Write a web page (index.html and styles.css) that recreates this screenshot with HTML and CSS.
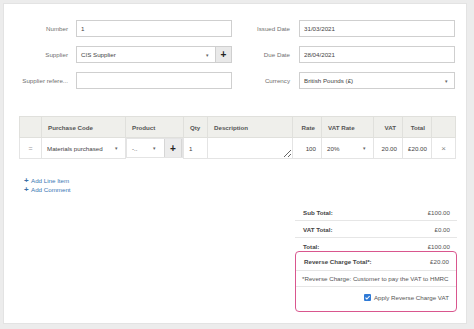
FILE: index.html
```html
<!DOCTYPE html>
<html lang="en">
<head>
    <meta charset="UTF-8">
    <meta name="viewport" content="width=device-width, initial-scale=1.0">
    <title>Purchase Invoice</title>
    <link rel="stylesheet" href="styles.css">
</head>
<body>

    <div class="panel">
        <!-- Header fields -->
        <div class="form-grid">
            <label class="label">Number</label>
            <input class="field" type="text" value="1">
            <label class="label label-right">Issued Date</label>
            <input class="field" type="text" value="31/03/2021">

            <label class="label">Supplier</label>
            <div class="group">
                <div class="field select">
                    <span>CIS Supplier</span>
                    <span class="caret">&#9662;</span>
                </div>
                <button class="add-button">+</button>
            </div>
            <label class="label label-right">Due Date</label>
            <input class="field" type="text" value="28/04/2021">

            <label class="label">Supplier refere...</label>
            <input class="field" type="text" value="">
            <label class="label label-right">Currency</label>
            <div class="field select">
                <span>British Pounds (£)</span>
                <span class="caret">&#9662;</span>
            </div>
        </div>

        <!-- Line items -->
        <table class="lines">
            <colgroup>
                <col style="width: 22px">
                <col style="width: 84px">
                <col style="width: 58px">
                <col style="width: 24px">
                <col style="width: 85px">
                <col style="width: 29px">
                <col style="width: 52px">
                <col style="width: 29px">
                <col style="width: 29px">
                <col style="width: 24px">
            </colgroup>
            <thead>
                <tr>
                    <th></th>
                    <th>Purchase Code</th>
                    <th>Product</th>
                    <th>Qty</th>
                    <th>Description</th>
                    <th class="num">Rate</th>
                    <th>VAT Rate</th>
                    <th class="num">VAT</th>
                    <th class="num">Total</th>
                    <th></th>
                </tr>
            </thead>
            <tbody>
                <tr>
                    <td class="handle">=</td>
                    <td>
                        <div class="cell-select">
                            <span>Materials purchased</span>
                            <span class="caret">&#9662;</span>
                        </div>
                    </td>
                    <td class="product">
                        <div class="cell-select">
                            <span>-..</span>
                            <span class="caret">&#9662;</span>
                        </div>
                        <button class="row-add">+</button>
                    </td>
                    <td>1</td>
                    <td class="desc"><textarea></textarea></td>
                    <td class="num">100</td>
                    <td>
                        <div class="cell-select">
                            <span>20%</span>
                            <span class="caret">&#9662;</span>
                        </div>
                    </td>
                    <td class="num">20.00</td>
                    <td class="num">£20.00</td>
                    <td class="remove">&times;</td>
                </tr>
            </tbody>
        </table>

        <div class="links">
            <a href="#" class="link"><span class="plus">+</span>Add Line Item</a>
            <a href="#" class="link"><span class="plus">+</span>Add Comment</a>
        </div>

        <!-- Totals -->
        <div class="totals">
            <div class="total-row line">
                <b>Sub Total:</b><span>£100.00</span>
            </div>
            <div class="total-row line">
                <b>VAT Total:</b><span>£0.00</span>
            </div>
            <div class="total-row last">
                <b>Total:</b><span>£100.00</span>
            </div>

            <div class="reverse-box">
                <div class="total-row line reverse-row">
                    <b>Reverse Charge Total*:</b><span>£20.00</span>
                </div>
                <div class="note line">*Reverse Charge: Customer to pay the VAT to HMRC</div>
                <div class="apply">
                    <svg class="check" width="7" height="7" viewBox="0 0 7 7">
                        <rect width="7" height="7" rx="1" fill="#2f7ad6"/>
                        <path d="M1.5 3.6 L2.9 5 L5.6 2" stroke="#fff" stroke-width="1.1" fill="none"/>
                    </svg>
                    Apply Reverse Charge VAT
                </div>
            </div>
        </div>
    </div>

</body>
</html>
```

FILE: styles.css
```css
body {
    margin: 0;
    background: #ececec;
    font-family: "Liberation Sans", Arial, sans-serif;
    font-size: 6.2px;
    color: #555;
}
.panel {
    margin: 3px 7px 0 3px;
    height: 321px;
    box-sizing: border-box;
    background: white;
    border: 1px solid #e3e3e3;
    padding: 16px 11px 0 15px;
}
.form-grid {
    display: grid;
    grid-template-columns: 57px 156px 67px 156px;
    grid-auto-rows: 17px;
    row-gap: 9px;
}
.label {
    align-self: center;
    text-align: right;
    padding-right: 8px;
    white-space: nowrap;
    overflow: hidden;
    color: #707070;
}
.label-right {
    padding-right: 9px;
}
.field {
    box-sizing: border-box;
    height: 17px;
    width: 100%;
    margin: 0;
    border: 1px solid #cfcfcf;
    padding: 0 4px;
    font-family: inherit;
    font-size: 6.2px;
    color: #444;
    background: white;
    outline: none;
}
.select {
    display: flex;
    align-items: center;
    justify-content: space-between;
}
.caret {
    font-size: 5px;
    color: #666;
    padding-right: 2px;
}
.group {
    display: flex;
}
.add-button {
    width: 16px;
    height: 17px;
    flex-shrink: 0;
    border: 1px solid #cfcfcf;
    border-left: none;
    background: #e9e9e9;
    padding: 0;
    font-family: inherit;
    font-size: 10px;
    font-weight: bold;
    line-height: 14px;
    color: #222;
}
.lines {
    margin-top: 27px;
    width: 436px;
    border-collapse: collapse;
    table-layout: fixed;
}
.lines th {
    height: 20px;
    padding: 0 6px;
    background: #efefeb;
    border: 1px solid #e0e0dc;
    text-align: left;
    font-weight: bold;
    color: #555;
    white-space: nowrap;
    overflow: hidden;
}
.lines td {
    height: 20px;
    padding: 0 5px;
    border: 1px solid #e4e4e4;
    color: #444;
    white-space: nowrap;
}
.lines .num {
    text-align: right;
}
.lines .handle {
    text-align: center;
    color: #999;
    font-size: 7px;
}
.lines .remove {
    text-align: center;
    color: #888;
    font-size: 8px;
}
.cell-select {
    display: flex;
    align-items: center;
    justify-content: space-between;
}
.lines td.product {
    padding: 0;
    padding-left: 5px;
}
.product {
    display: flex;
    align-items: stretch;
    height: 20px;
    box-sizing: border-box;
}
.product .cell-select {
    flex: 1;
    padding-right: 6px;
}
.row-add {
    width: 18px;
    border: 1px solid #d6d6d6;
    border-top: none;
    border-bottom: none;
    background: #ececec;
    padding: 0;
    font-family: inherit;
    font-size: 10px;
    font-weight: bold;
    color: #222;
}
.lines td.desc {
    padding: 0;
}
.desc textarea {
    display: block;
    width: 100%;
    height: 19px;
    box-sizing: border-box;
    border: none;
    margin: 0;
    resize: both;
    outline: none;
    background: transparent;
}
.links {
    display: flex;
    flex-direction: column;
    margin-top: 17px;
    margin-left: 5px;
}
.link {
    line-height: 9px;
    color: #3b76b2;
    text-decoration: none;
}
.plus {
    display: inline-block;
    width: 7px;
    font-weight: bold;
    font-size: 8px;
    color: #3b6fa6;
}
.totals {
    width: 162px;
    margin: 10px -2px 0 auto;
}
.total-row {
    display: flex;
    justify-content: space-between;
    align-items: center;
    height: 17px;
    box-sizing: border-box;
    padding: 0 7px 0 8px;
    color: #555;
}
.total-row b {
    color: #444;
}
.line {
    border-bottom: 1px solid #e6e6e6;
}
.last {
    height: 13px;
    padding-top: 3px;
}
.reverse-box {
    border: 1px solid #d9568e;
    border-radius: 4px;
    height: 61px;
    box-sizing: border-box;
}
.reverse-row {
    height: 19px;
}
.note {
    height: 16px;
    box-sizing: border-box;
    padding: 0 6px;
    display: flex;
    align-items: center;
    color: #555;
}
.apply {
    display: flex;
    align-items: center;
    justify-content: flex-end;
    gap: 3px;
    padding: 7px 7px 0 0;
    color: #555;
}
.check {
    display: block;
}
```
